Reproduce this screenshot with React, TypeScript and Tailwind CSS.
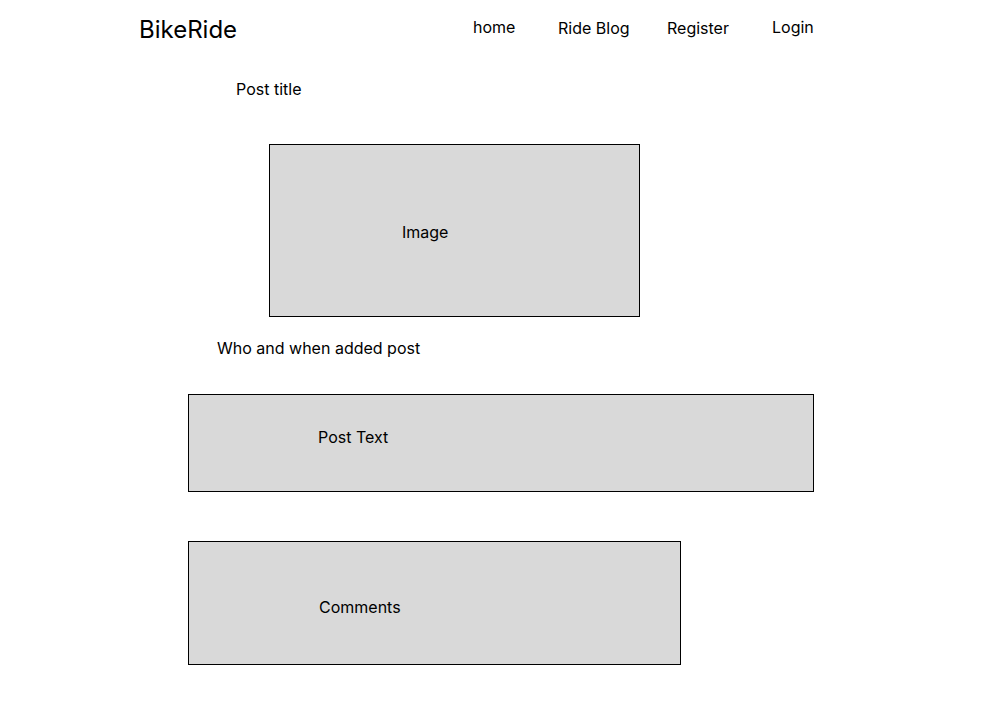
import React from 'react';

const navItems = [
  { label: 'home', className: 'w-[85px] -mt-[4px]' },
  { label: 'Ride Blog', className: 'w-[109px] -mt-[2px]' },
  { label: 'Register', className: 'w-[105px] -mt-[2px]' },
  { label: 'Login', className: '-mt-[4px]' },
];

const App: React.FC = () => {
  return (
    <div className="min-h-screen w-full bg-white text-black font-['Inter',sans-serif]">
      <header className="flex h-[58px] items-center pl-[139px]">
        <div className="w-[334px] pt-[2px] text-2xl leading-none">BikeRide</div>
        <nav className="flex items-center">
          {navItems.map((item) => (
            <a key={item.label} className={`text-base leading-6 ${item.className}`}>
              {item.label}
            </a>
          ))}
        </nav>
      </header>

      <main className="flex flex-col">
        <h1 className="mt-[19px] pl-[236px] text-base leading-6">Post title</h1>

        <div className="ml-[269px] mt-[43px] flex h-[173px] w-[371px] border border-black bg-[#d9d9d9] pl-[132px] pt-[75px]">
          <span className="text-base leading-6">Image</span>
        </div>

        <p className="mt-[19px] pl-[217px] text-base leading-6">Who and when added post</p>

        <div className="ml-[188px] mt-[34px] flex h-[98px] w-[626px] border border-black bg-[#d9d9d9] pl-[129px] pt-[30px]">
          <span className="text-base leading-6">Post Text</span>
        </div>

        <div className="ml-[188px] mt-[49px] flex h-[124px] w-[493px] border border-black bg-[#d9d9d9] pl-[130px] pt-[53px]">
          <span className="text-base leading-6">Comments</span>
        </div>
      </main>
    </div>
  );
};

export default App;
